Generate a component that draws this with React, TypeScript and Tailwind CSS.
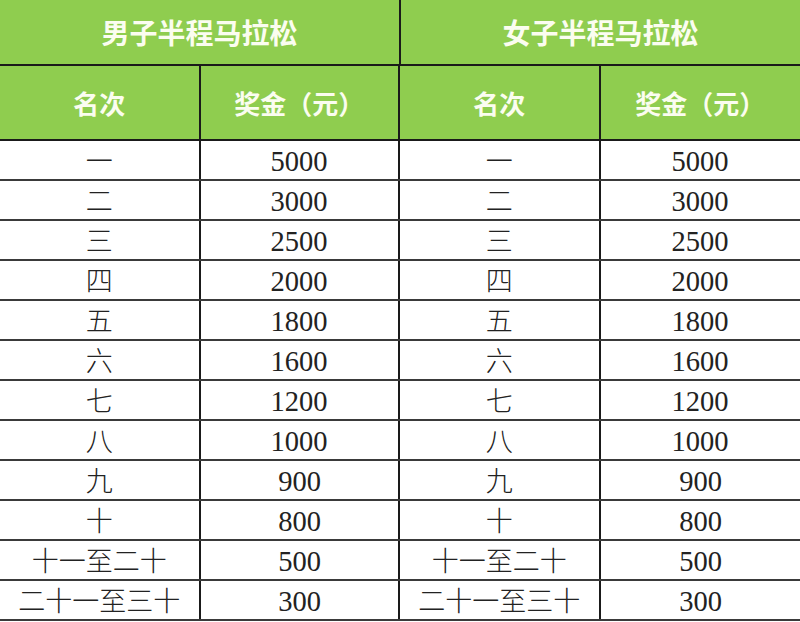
import React from "react";

const rows: [string, string][] = [
  ["一", "5000"],
  ["二", "3000"],
  ["三", "2500"],
  ["四", "2000"],
  ["五", "1800"],
  ["六", "1600"],
  ["七", "1200"],
  ["八", "1000"],
  ["九", "900"],
  ["十", "800"],
  ["十一至二十", "500"],
  ["二十一至三十", "300"],
];

const cjk = "font-['Noto_Sans_CJK_SC',sans-serif]";
const num = "font-['Liberation_Serif','Noto_Sans_CJK_SC',serif]";

export default function App() {
  return (
    <div className="w-[800px] h-[622px] bg-white overflow-hidden">
      {/* title row */}
      <div className="flex h-[66px] bg-[#8fcd4f] border-b-2 border-[#1a1a1a]">
        <div className={`w-[401px] border-r-2 border-[#1a1a1a] flex items-center justify-center text-[#fbfdf0] text-[28px] font-bold ${cjk}`}>
          男子半程马拉松
        </div>
        <div className={`flex-1 flex items-center justify-center text-[#fbfdf0] text-[28px] font-bold ${cjk}`}>
          女子半程马拉松
        </div>
      </div>
      {/* header row */}
      <div className="flex h-[75px] bg-[#8fcd4f] border-b-2 border-[#1a1a1a]">
        {[0, 1].map((i) => (
          <React.Fragment key={i}>
            <div className={`w-[201px] border-r-2 border-[#1a1a1a] flex items-center justify-center text-[#fbfdf0] text-[26px] font-bold ${cjk}`}>
              名次
            </div>
            <div className={`w-[200px] ${i === 0 ? "border-r-2 border-[#1a1a1a]" : ""} flex items-center justify-center text-[#fbfdf0] text-[26px] font-bold ${cjk}`}>
              奖金（元）
            </div>
          </React.Fragment>
        ))}
      </div>
      {rows.map(([rank, amt], r) => (
        <div key={r} className="flex h-[40px] border-b-2 border-[#3a3a3a]">
          {[0, 1].map((i) => (
            <React.Fragment key={i}>
              <div className={`w-[201px] border-r-2 border-[#1a1a1a] flex items-center justify-center text-[#222] text-[27px] font-light ${cjk}`}>
                {rank}
              </div>
              <div className={`w-[200px] ${i === 0 ? "border-r-2 border-[#1a1a1a]" : ""} flex items-center justify-center text-[#222] text-[30px] ${num}`}>
                <span className="inline-block scale-x-[0.95]">{amt}</span>
              </div>
            </React.Fragment>
          ))}
        </div>
      ))}
    </div>
  );
}
